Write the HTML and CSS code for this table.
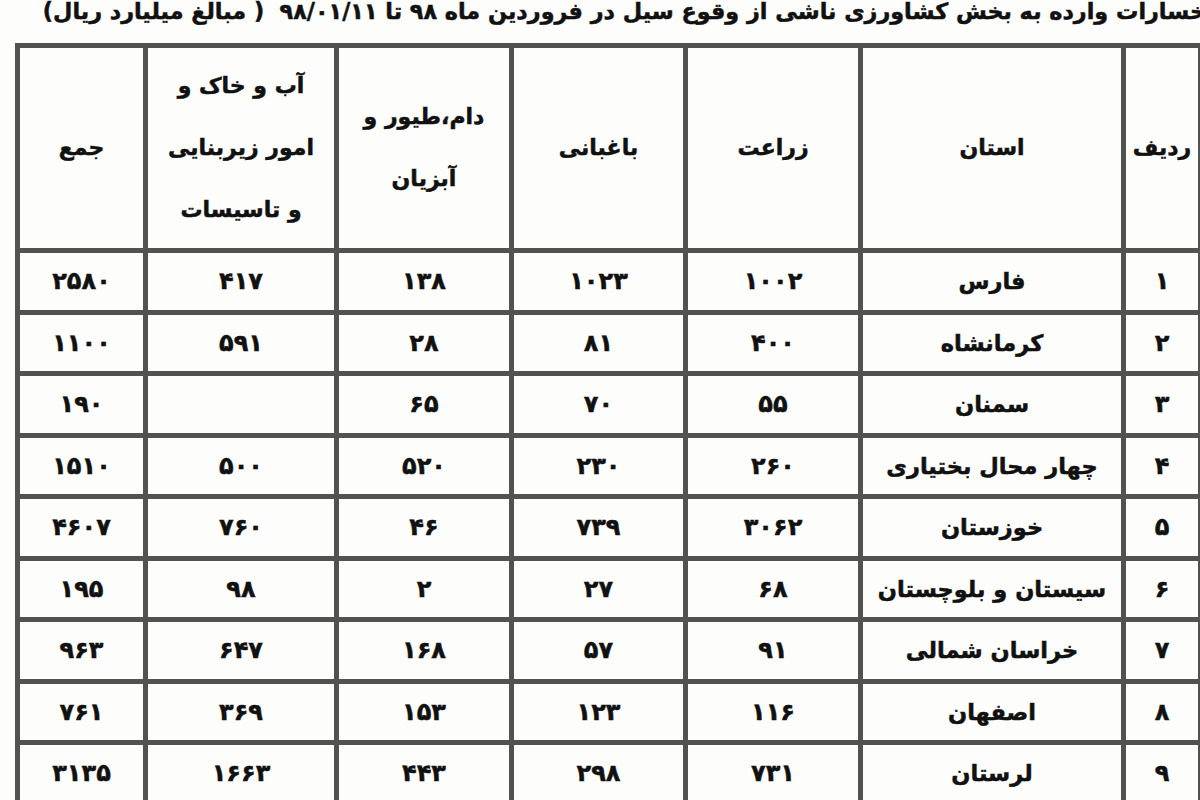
FILE: index.html
```html
<!DOCTYPE html>
<html lang="fa">
<head>
<meta charset="utf-8">
<title>خسارات وارده به بخش کشاورزی</title>
<link rel="stylesheet" href="styles.css">
</head>
<body>
<div class="page">
  <div class="title"><span class="title-text">خسارات وارده به بخش کشاورزی ناشی از وقوع سیل در فروردین ماه ۹۸ تا ۹۸/۰۱/۱۱ &nbsp;( مبالغ میلیارد ریال)</span></div>
  <table class="losses">
    <colgroup>
      <col class="c-row">
      <col class="c-prov">
      <col class="c-farm">
      <col class="c-garden">
      <col class="c-live">
      <col class="c-water">
      <col class="c-sum">
    </colgroup>
    <thead>
      <tr class="head">
        <th>ردیف</th>
        <th>استان</th>
        <th>زراعت</th>
        <th>باغبانی</th>
        <th>دام،طیور و<br>آبزیان</th>
        <th>آب و خاک و<br>امور زیربنایی<br>و تاسیسات</th>
        <th>جمع</th>
      </tr>
    </thead>
    <tbody>
      <tr><td>۱</td><td class="prov">فارس</td><td>۱۰۰۲</td><td>۱۰۲۳</td><td>۱۳۸</td><td>۴۱۷</td><td>۲۵۸۰</td></tr>
      <tr><td>۲</td><td class="prov">کرمانشاه</td><td>۴۰۰</td><td>۸۱</td><td>۲۸</td><td>۵۹۱</td><td>۱۱۰۰</td></tr>
      <tr><td>۳</td><td class="prov">سمنان</td><td>۵۵</td><td>۷۰</td><td>۶۵</td><td></td><td>۱۹۰</td></tr>
      <tr><td>۴</td><td class="prov">چهار محال بختیاری</td><td>۲۶۰</td><td>۲۳۰</td><td>۵۲۰</td><td>۵۰۰</td><td>۱۵۱۰</td></tr>
      <tr><td>۵</td><td class="prov">خوزستان</td><td>۳۰۶۲</td><td>۷۳۹</td><td>۴۶</td><td>۷۶۰</td><td>۴۶۰۷</td></tr>
      <tr><td>۶</td><td class="prov">سیستان و بلوچستان</td><td>۶۸</td><td>۲۷</td><td>۲</td><td>۹۸</td><td>۱۹۵</td></tr>
      <tr><td>۷</td><td class="prov">خراسان شمالی</td><td>۹۱</td><td>۵۷</td><td>۱۶۸</td><td>۶۴۷</td><td>۹۶۳</td></tr>
      <tr><td>۸</td><td class="prov">اصفهان</td><td>۱۱۶</td><td>۱۲۳</td><td>۱۵۳</td><td>۳۶۹</td><td>۷۶۱</td></tr>
      <tr><td>۹</td><td class="prov">لرستان</td><td>۷۳۱</td><td>۲۹۸</td><td>۴۴۳</td><td>۱۶۶۳</td><td>۳۱۳۵</td></tr>
    </tbody>
  </table>
</div>
</body>
</html>
```
FILE: styles.css
```css
html, body {
  margin: 0;
  padding: 0;
  background: #fdfdfb;
}
.page {
  width: 1200px;
  height: 800px;
  overflow: hidden;
  font-family: "DejaVu Sans", sans-serif;
  font-weight: bold;
  color: #111;
  -webkit-text-stroke: 0.5px #111;
}
.title {
  height: 43px;
  direction: rtl;
  white-space: nowrap;
  margin-right: -6px;
  font-size: 22.3px;
  line-height: 22px;
  text-align: right;
}
.title-text {
  display: inline-block;
}
.losses {
  direction: rtl;
  margin-left: 15px;
  border-collapse: collapse;
  table-layout: fixed;
  width: 1183px;
  border: 5px solid #52524e;
}
.c-row { width: 77px; }
.c-prov { width: 263px; }
.c-farm { width: 175px; }
.c-garden { width: 174px; }
.c-live { width: 175px; }
.c-water { width: 191px; }
.c-sum { width: 128px; }
.losses th,
.losses td {
  border: 5px solid #52524e;
  padding: 0;
  text-align: center;
  vertical-align: middle;
  white-space: nowrap;
}
.losses th {
  font-size: 22px;
  line-height: 62px;
  font-weight: bold;
}
.head {
  height: 205px;
}
.losses tbody tr {
  height: 61.5px;
}
.losses td {
  font-size: 24px;
}
.losses td.prov {
  font-size: 22.5px;
}
```
